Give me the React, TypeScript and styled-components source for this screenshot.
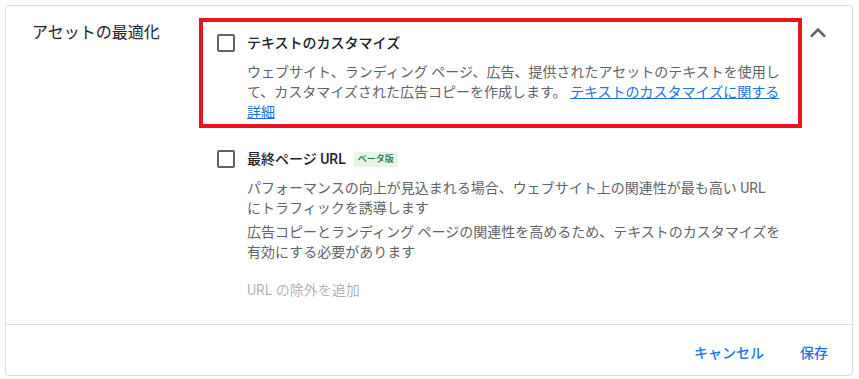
import styled, { createGlobalStyle } from "styled-components";

const GlobalStyle = createGlobalStyle`
  body {
    margin: 0;
    background: #ffffff;
    font-family: Roboto, "Noto Sans CJK JP", "Noto Sans", sans-serif;
    color: #202124;
  }
`;

const Card = styled.div`
  margin: 5px 6px 4px 5px;
  border: 1px solid #dadce0;
  border-radius: 4px;
  background: #fff;
`;

const Body = styled.div`
  display: flex;
  align-items: flex-start;
  padding: 12px 18px 18px 26px;
`;

const SectionLabel = styled.div`
  width: 167px;
  flex-shrink: 0;
  margin-top: 3px;
  font-size: 16px;
  line-height: 24px;
  color: #202124;
`;

const Options = styled.div`
  width: 604px;
  display: flex;
  flex-direction: column;
  gap: 6px;
`;

const Option = styled.div<{ $highlight?: boolean }>`
  border: 4px solid ${(p) => (p.$highlight ? "#e8161c" : "transparent")};
  padding: 11px 14px 2px;
`;

const OptionHead = styled.label`
  display: flex;
  align-items: center;
  gap: 12px;
  height: 20px;
  cursor: pointer;
`;

const Box = styled.span`
  width: 18px;
  height: 18px;
  box-sizing: border-box;
  border: 2px solid #5f6368;
  border-radius: 2px;
  flex-shrink: 0;
`;

const Title = styled.span`
  font-size: 14px;
  font-weight: 500;
  line-height: 20px;
  color: #202124;
`;

const Badge = styled.span`
  margin-left: -4px;
  padding: 2px 4px;
  font-size: 9px;
  line-height: 11px;
  font-weight: 500;
  color: #137333;
  background: #e6f4ea;
  border-radius: 2px;
`;

const Desc = styled.p<{ $gap?: number }>`
  margin: ${(p) => p.$gap ?? 9}px 0 0 30px;
  max-width: 535px;
  font-size: 14px;
  line-height: 20px;
  color: #5f6368;
`;

const Link = styled.a`
  color: #1a73e8;
  text-decoration: underline;
`;

const AddLink = styled.div`
  margin: 18px 0 0 30px;
  font-size: 14px;
  line-height: 20px;
  color: rgba(60, 64, 67, 0.42);
`;

const Toggle = styled.button`
  width: 32px;
  height: 32px;
  margin-top: -1px;
  padding: 0;
  border: none;
  background: none;
  color: #5f6368;
  cursor: pointer;
  svg {
    display: block;
  }
`;

const Footer = styled.div`
  display: flex;
  justify-content: flex-end;
  gap: 20px;
  padding: 9px 16px 5px;
  border-top: 1px solid #dadce0;
`;

const TextButton = styled.button`
  height: 36px;
  padding: 0 8px;
  border: none;
  background: none;
  font-family: inherit;
  font-size: 14px;
  font-weight: 500;
  color: #1a73e8;
  cursor: pointer;
`;

export default function App() {
  return (
    <>
      <GlobalStyle />
      <Card>
        <Body>
          <SectionLabel>アセットの最適化</SectionLabel>
          <Options>
            <Option $highlight>
              <OptionHead>
                <Box />
                <Title>テキストのカスタマイズ</Title>
              </OptionHead>
              <Desc>
                ウェブサイト、ランディング ページ、広告、提供されたアセットのテキストを使用して、カスタマイズされた広告コピーを作成します。{" "}
                <Link href="#">テキストのカスタマイズに関する詳細</Link>
              </Desc>
            </Option>
            <Option>
              <OptionHead>
                <Box />
                <Title>最終ページ URL</Title>
                <Badge>ベータ版</Badge>
              </OptionHead>
              <Desc>
                パフォーマンスの向上が見込まれる場合、ウェブサイト上の関連性が最も高い URL にトラフィックを誘導します
              </Desc>
              <Desc $gap={4}>
                広告コピーとランディング ページの関連性を高めるため、テキストのカスタマイズを有効にする必要があります
              </Desc>
              <AddLink>URL の除外を追加</AddLink>
            </Option>
          </Options>
          <Toggle aria-label="折りたたむ">
            <svg width="32" height="32" viewBox="0 0 24 24" fill="currentColor">
              <path d="M12 8l-6 6 1.41 1.41L12 10.83l4.59 4.58L18 14z" />
            </svg>
          </Toggle>
        </Body>
        <Footer>
          <TextButton>キャンセル</TextButton>
          <TextButton>保存</TextButton>
        </Footer>
      </Card>
    </>
  );
}
